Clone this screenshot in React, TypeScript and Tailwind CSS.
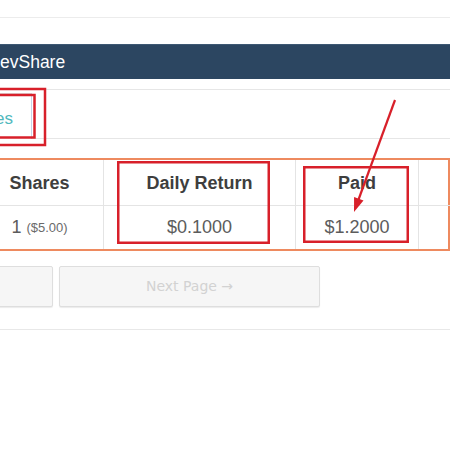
import React from "react";

const headers = ["Shares", "Daily Return", "Paid", ""];

export default function App() {
  return (
    <div className="relative w-[450px] h-[450px] overflow-hidden bg-white font-['Liberation_Sans',Arial,sans-serif]">
      {/* top rule */}
      <div className="h-[18px] border-b border-[#ececec]" />

      {/* panel heading */}
      <div className="mt-[26px] h-[35px] bg-[#2c4661] border-t border-[#3d5873] flex items-center pt-[2px]">
        <h2 className="text-[17.5px] text-white leading-none">evShare</h2>
      </div>

      {/* tabs */}
      <div className="mt-[10px] border-t border-b border-[#e6e6e6] h-[50px] flex items-start pt-[3px]">
        <div className="ml-[-20px] w-[52px] h-[46px] border border-b-0 border-[#dcdcdc] border-r-[#c9d3ea] bg-white flex items-center justify-end pr-[18px] pt-[4px]">
          <span className="text-[17px] text-[#4fb8bd]">es</span>
        </div>
      </div>

      {/* table */}
      <div className="mt-[19px] ml-[-24px] w-[474px] border-t-2 border-b-2 border-[#ee8a5f]">
        <div className="grid grid-cols-[128px_192px_123px_31px] h-[46px] border-b border-[#e4e4e4]">
          {headers.map((h, i) => (
            <div
              key={i}
              className={
                i === 3
                  ? "border-r-2 border-[#ee8a5f]"
                  : "border-r border-[#e4e4e4] flex items-center justify-center pt-[2px] text-[18px] font-bold text-[#3e3e3e]"
              }
            >
              {h}
            </div>
          ))}
        </div>
        <div className="grid grid-cols-[128px_192px_123px_31px] h-[43px] text-[18px] text-[#5c5c5c]">
          <div className="border-r border-[#e4e4e4] flex items-center justify-center gap-[5px]">
            1 <small className="text-[13px] text-[#6a6a6a]">($5.00)</small>
          </div>
          <div className="border-r border-[#e4e4e4] flex items-center justify-center">$0.1000</div>
          <div className="border-r border-[#e4e4e4] flex items-center justify-center">$1.2000</div>
          <div className="border-r-2 border-[#ee8a5f]" />
        </div>
      </div>

      {/* pager */}
      <div className="mt-[15px] flex gap-[6px] h-[41px]">
        <button className="ml-[-20px] w-[73px] bg-[#f6f6f6] border border-[#dedede] rounded-[2px] shadow-[0_1px_1px_rgba(0,0,0,0.08)]" />
        <button className="w-[261px] bg-[#f6f6f6] border border-[#dedede] rounded-[2px] shadow-[0_1px_1px_rgba(0,0,0,0.08)] font-['DejaVu_Sans',sans-serif] text-[14px] text-[#d2d2d2]">
          Next Page →
        </button>
      </div>
      <div className="mt-[22px] border-t border-[#e8e8e8]" />

      {/* annotations */}
      <svg className="absolute inset-0" width="450" height="450" viewBox="0 0 450 450" fill="none">
        <g stroke="#d8202a" strokeWidth="2.5">
          <rect x="-10" y="89" width="55" height="56" />
          <rect x="-10" y="95" width="44.5" height="42.5" />
          <rect x="118.25" y="162.25" width="150.5" height="80.5" />
          <rect x="304.25" y="167.25" width="103.5" height="74.5" />
          <line x1="395" y1="100" x2="358" y2="201" strokeWidth="2.2" />
        </g>
        <polygon points="354,212 363.5,200.5 354.1,197.1" fill="#d8202a" />
      </svg>
    </div>
  );
}
